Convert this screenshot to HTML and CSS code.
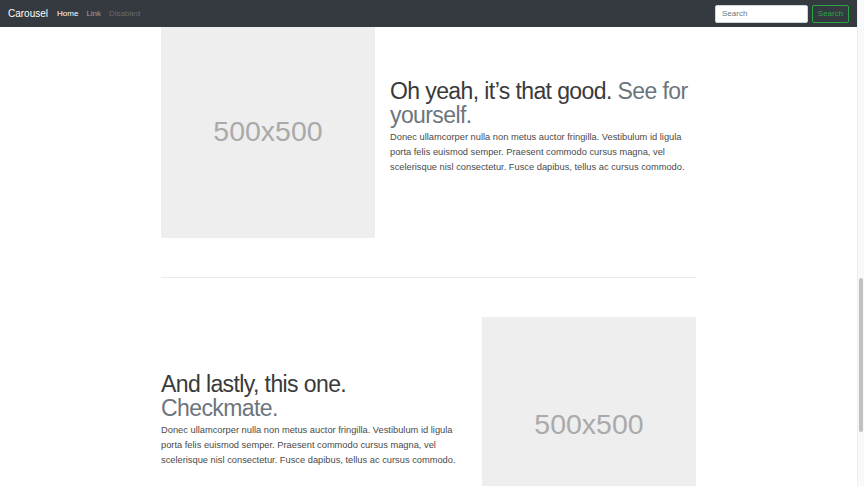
FILE: index.html
```html
<!DOCTYPE html>
<html lang="en">
<head>
<meta charset="utf-8">
<title>Carousel</title>
<link rel="stylesheet" href="styles.css">
</head>
<body>
<header class="navbar">
  <a class="brand" href="#">Carousel</a>
  <nav class="nav">
    <a class="nav-link active" href="#">Home</a>
    <a class="nav-link" href="#">Link</a>
    <a class="nav-link disabled" href="#">Disabled</a>
  </nav>
  <form class="search">
    <input class="search-input" type="text" placeholder="Search">
    <button class="search-btn" type="button">Search</button>
  </form>
</header>
<main class="page">
  <div class="container">
    <div class="featurette">
      <div class="col-text order-2">
        <h2 class="featurette-heading">Oh yeah, it’s that good. <span class="muted">See for yourself.</span></h2>
        <p class="lead">Donec ullamcorper nulla non metus auctor fringilla. Vestibulum id ligula porta felis euismod semper. Praesent commodo cursus magna, vel scelerisque nisl consectetur. Fusce dapibus, tellus ac cursus commodo.</p>
      </div>
      <div class="col-img order-1">
        <div class="placeholder">500x500</div>
      </div>
    </div>
    <hr class="divider">
    <div class="featurette">
      <div class="col-text">
        <h2 class="featurette-heading">And lastly, this one. <span class="muted">Checkmate.</span></h2>
        <p class="lead">Donec ullamcorper nulla non metus auctor fringilla. Vestibulum id ligula porta felis euismod semper. Praesent commodo cursus magna, vel scelerisque nisl consectetur. Fusce dapibus, tellus ac cursus commodo.</p>
      </div>
      <div class="col-img">
        <div class="placeholder">500x500</div>
      </div>
    </div>
  </div>
</main>
<div class="scrollbar"><div class="thumb"></div></div>
</body>
</html>
```
FILE: styles.css
```css
html, body {
  margin: 0;
  padding: 0;
  height: 100%;
  overflow: hidden;
  background: #fff;
}
body {
  font-family: "Liberation Sans", Arial, sans-serif;
  color: #212529;
}
.navbar {
  position: fixed;
  top: 0;
  left: 0;
  width: 857px;
  height: 27px;
  background: #343a40;
  display: flex;
  align-items: center;
  padding: 0 8px;
  box-sizing: border-box;
  z-index: 10;
}
.brand {
  color: #fff;
  text-decoration: none;
  font-size: 10px;
  margin-right: 9px;
}
.nav {
  display: flex;
  flex: 1;
}
.nav-link {
  font-size: 8px;
  color: rgba(255,255,255,.5);
  text-decoration: none;
  padding: 0 4px;
}
.nav-link:first-child { padding-left: 0; }
.nav-link.active { color: #fff; }
.nav-link.disabled { color: rgba(255,255,255,.25); }
.search {
  display: flex;
  align-items: center;
  gap: 4px;
}
.search-input {
  width: 93px;
  height: 18px;
  box-sizing: border-box;
  border: 1px solid #ced4da;
  border-radius: 2px;
  padding: 0 6px;
  font-family: inherit;
  font-size: 8px;
  color: #495057;
  background: #fff;
}
.search-input::placeholder { color: #6c757d; }
.search-btn {
  width: 37px;
  height: 18px;
  box-sizing: border-box;
  border: 1px solid #28a745;
  border-radius: 2px;
  background: transparent;
  color: #28a745;
  font-family: inherit;
  font-size: 8px;
  padding: 0;
}
.page {
  width: 857px;
  padding-top: 24px;
}
.container {
  width: 535px;
  margin: 0 auto;
}
.featurette {
  display: flex;
  align-items: center;
  gap: 15px;
}
.col-text {
  flex: 1;
}
.col-img {
  width: 214px;
  flex: none;
}
.order-1 { order: 1; }
.order-2 { order: 2; }
.placeholder {
  width: 214px;
  height: 214px;
  background: #eee;
  color: #aaa;
  font-size: 28.5px;
  display: flex;
  align-items: center;
  justify-content: center;
}
.featurette-heading {
  font-size: 23px;
  font-weight: 400;
  line-height: 24px;
  letter-spacing: -0.6px;
  margin: 0 0 3px;
  color: #3a3a3a;
}
.muted { color: #6c757d; }
.lead {
  font-size: 9.3px;
  line-height: 15px;
  font-weight: 400;
  margin: 0 0 8px;
  color: #4a4a4a;
}
.divider {
  border: 0;
  border-top: 1px solid rgba(0,0,0,.08);
  margin: 39px 0;
}
.scrollbar {
  position: fixed;
  top: 0;
  right: 0;
  width: 7px;
  height: 486px;
  background: #f9f9f9;
  border-left: 1px solid #eee;
  box-sizing: border-box;
}
.thumb {
  position: absolute;
  left: 1px;
  width: 4px;
  top: 278px;
  height: 154px;
  border-radius: 3px;
  background: #c1c1c1;
}
```
